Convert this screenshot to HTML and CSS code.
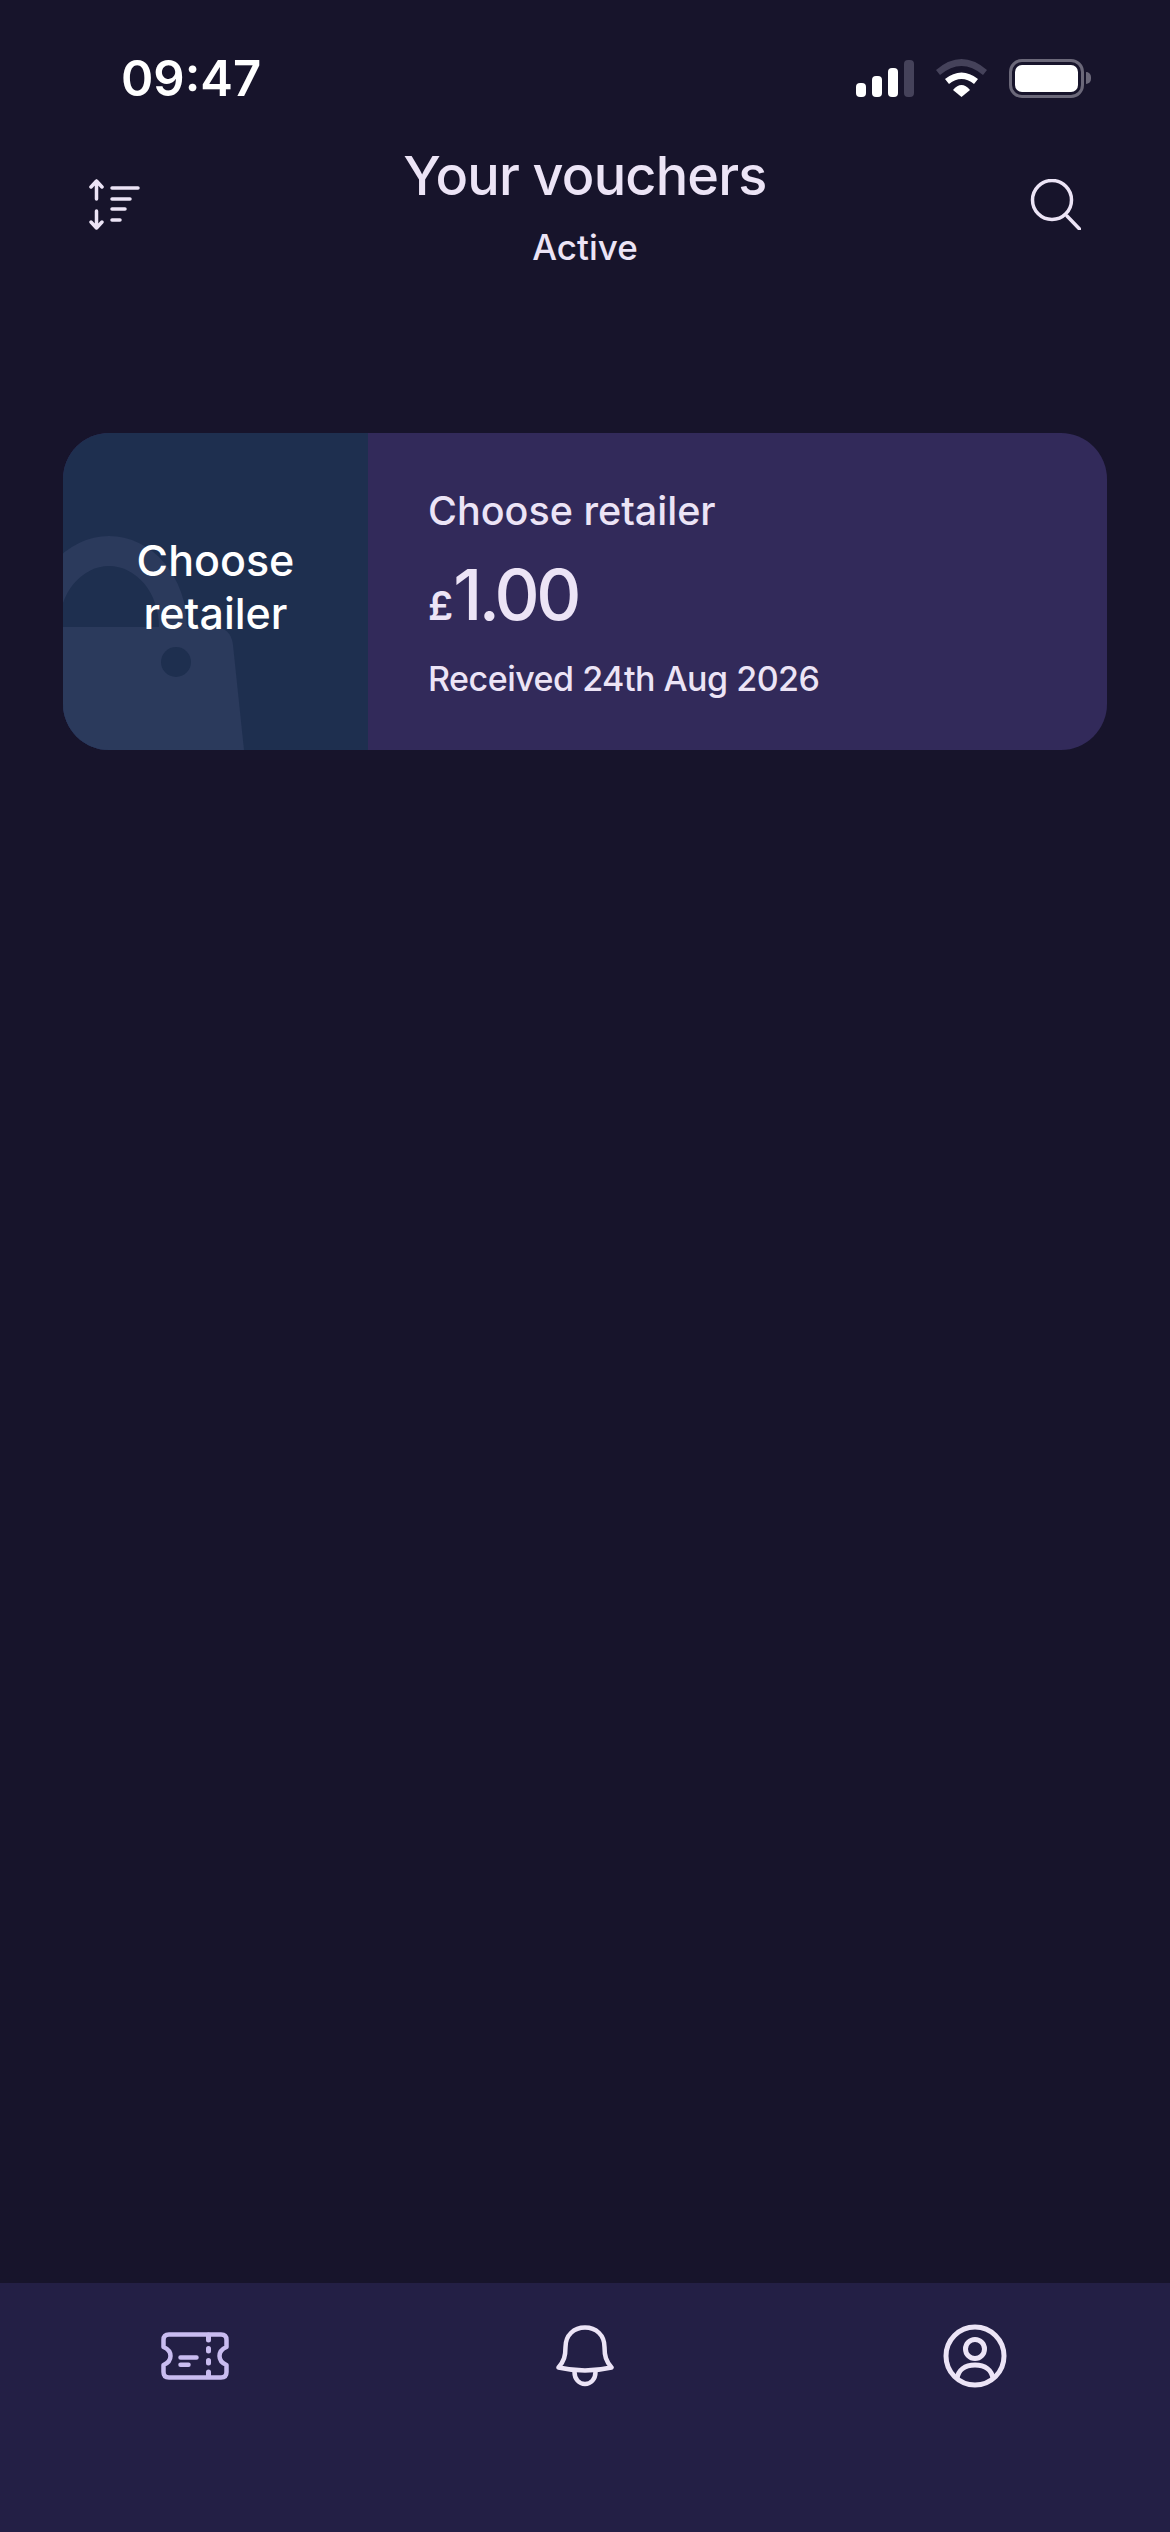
FILE: index.html
```html
<!DOCTYPE html>
<html lang="en">

<head>
    <meta charset="UTF-8" />
    <meta name="viewport" content="width=device-width, initial-scale=1.0" />
    <title>Your vouchers</title>
    <link rel="stylesheet" href="styles.css">
</head>

<body>
    <div class="app">
        <!-- Status bar -->
        <div class="status-bar">
            <span class="time">09:47</span>
            <div class="status-icons">
                <svg width="58" height="38" viewBox="0 0 58 38">
                    <rect x="0" y="24" width="10" height="14" rx="4" fill="#fff" />
                    <rect x="16" y="17" width="10" height="21" rx="4" fill="#fff" />
                    <rect x="32" y="9" width="10" height="29" rx="4" fill="#fff" />
                    <rect x="48" y="1" width="10" height="37" rx="4" fill="#45425a" />
                </svg>
                <svg width="51" height="38" viewBox="0 0 51 38">
                    <path d="M0 11Q25.500 -11 51 11L47 16Q25.500 -2 4 16Z" fill="#45425a" />
                    <path d="M9 20Q25.500 7 42 20L38 25Q25.500 15 13 25Z" fill="#fff" />
                    <path d="M17 31Q25.500 21 34 31L25.500 38Z" fill="#fff" />
                </svg>
                <div class="battery">
                    <div class="battery-level"></div>
                </div>
                <div class="battery-cap"></div>
            </div>
        </div>

        <!-- Header -->
        <header class="header">
            <button class="icon-btn">
                <svg width="51" height="51" viewBox="0 0 51 51" fill="none" stroke="#ece4f6" stroke-width="3.500" stroke-linecap="round" stroke-linejoin="round">
                    <path d="M7.500 20V2M2 8L7.500 2 13 8" />
                    <path d="M7.500 32V49M2 43L7.500 49 13 43" />
                    <path d="M23 9H49M23 20H41M23 30H36M23 41H31" />
                </svg>
            </button>
            <div class="header-title">
                <h1>Your vouchers</h1>
                <p>Active</p>
            </div>
            <button class="icon-btn icon-right">
                <svg width="51" height="51" viewBox="0 0 51 51" fill="none" stroke="#ece4f6" stroke-width="3.500" stroke-linecap="round">
                    <circle cx="22" cy="21" r="19.500" />
                    <path d="M37 37L49.500 50" />
                </svg>
            </button>
        </header>

        <!-- Voucher list -->
        <main class="vouchers">
            <div class="voucher-card">
                <div class="voucher-logo">
                    <svg class="lock-bg" width="305" height="317" viewBox="0 0 305 317">
                        <path d="M-32 194A78 91 0 0 1 124 194H96A50 61 0 0 0 -4 194Z" fill="#2b3a5c" />
                        <path d="M-20 194H150Q168 194 170 212L181 317H-20Z" fill="#2b3a5c" />
                        <circle cx="113" cy="229" r="15" fill="#1e2f4f" />
                    </svg>
                    <span class="logo-text">Choose retailer</span>
                </div>
                <div class="voucher-info">
                    <div class="retailer">Choose retailer</div>
                    <div class="amount"><span class="currency">£</span>1.00</div>
                    <div class="received">Received 24th Aug 2026</div>
                </div>
            </div>
        </main>

        <!-- Bottom nav -->
        <nav class="tab-bar">
            <div class="tab">
                <svg width="68" height="48" viewBox="0 0 68 48" fill="none" stroke="#c9bcf0" stroke-width="4.500" stroke-linecap="round" stroke-linejoin="round">
                    <path d="M8 2.500H60Q65.500 2.500 65.500 8V15Q58.500 18 58.500 24T65.500 33V40Q65.500 45.500 60 45.500H8Q2.500 45.500 2.500 40V33Q9.500 30 9.500 24T2.500 15V8Q2.500 2.500 8 2.500Z" />
                    <path d="M47.500 3v5M47.500 16.500v2.500M47.500 28.500v2.500M47.500 40v4" stroke-width="5" />
                    <path d="M19.500 25.500h16M19.500 32.700h8" />
                </svg>
            </div>
            <div class="tab">
                <svg width="58" height="62" viewBox="0 0 58 62" fill="none" stroke="#ece4f6" stroke-width="4.500" stroke-linecap="round" stroke-linejoin="round">
                    <path d="M2.500 42.500C8 36 9.500 31 9.500 22C9.500 10 18 2.500 29 2.500S48.500 10 48.500 22C48.500 31 50 36 55.500 42.500C38 46.500 20 46.500 2.500 42.500Z" />
                    <path d="M18.500 47C18.500 54 23 59 29 59S39.500 54 39.500 47" />
                </svg>
            </div>
            <div class="tab">
                <svg width="64" height="64" viewBox="0 0 64 64" fill="none" stroke="#ece4f6" stroke-width="5">
                    <circle cx="32" cy="32" r="29" />
                    <circle cx="32" cy="25" r="9.500" />
                    <path d="M14 55C15 46 22 41 32 41S49 46 50 55" />
                </svg>
            </div>
        </nav>
    </div>
</body>

</html>
```

FILE: styles.css
```css
* {
    margin: 0;
    padding: 0;
    box-sizing: border-box;
}

body {
    font-family: Inter, "Liberation Sans", sans-serif;
    background-color: #17142b;
    color: #ece4f6;
}

.app {
    display: flex;
    flex-direction: column;
    height: 100vh;
}

.status-bar {
    display: flex;
    justify-content: space-between;
    align-items: center;
    height: 58px;
    margin-top: 49px;
    padding: 0 79px 0 121px;
}

.time {
    font-size: 49px;
    font-weight: 600;
    color: #fff;
}

.status-icons {
    display: flex;
    align-items: center;
    gap: 22px;
}

.battery {
    width: 75px;
    height: 39px;
    padding: 3px;
    border: 3px solid #6b6879;
    border-radius: 13px;
}

.battery-level {
    height: 100%;
    background-color: #fff;
    border-radius: 7px;
}

.battery-cap {
    width: 5px;
    height: 12px;
    margin-left: -20px;
    background-color: #6b6879;
    border-radius: 0 5px 5px 0;
}

.header {
    display: grid;
    grid-template-columns: 1fr auto 1fr;
    align-items: start;
    padding: 37px 89px 0;
}

.icon-btn {
    display: flex;
    margin-top: 35px;
    background: none;
    border: none;
}

.icon-right {
    justify-content: flex-end;
}

.header-title {
    text-align: center;
}

.header-title h1 {
    font-size: 54px;
    font-weight: 500;
    line-height: 64px;
    letter-spacing: -0.8px;
}

.header-title p {
    font-size: 35px;
    font-weight: 500;
    line-height: 44px;
    margin-top: 17px;
}

.vouchers {
    flex: 1;
    padding: 164px 63px 0;
}

.voucher-card {
    display: flex;
    height: 317px;
    overflow: hidden;
    background-color: #322a5a;
    border-radius: 46px;
}

.voucher-logo {
    position: relative;
    display: flex;
    align-items: center;
    justify-content: center;
    width: 305px;
    padding-bottom: 10px;
    background-color: #1e2f4f;
}

.lock-bg {
    position: absolute;
    top: 0;
    left: 0;
}

.logo-text {
    position: relative;
    width: 200px;
    font-size: 43px;
    font-weight: 500;
    line-height: 53px;
    text-align: center;
    color: #fff;
}

.voucher-info {
    padding: 54px 0 0 60px;
}

.retailer {
    font-size: 39.500px;
    font-weight: 500;
    line-height: 48px;
}

.amount {
    display: flex;
    align-items: baseline;
    font-size: 70px;
    font-weight: 500;
    line-height: 80px;
    letter-spacing: -3.500px;
    margin-top: 20px;
}

.currency {
    font-size: 40px;
    font-weight: 600;
    letter-spacing: 0;
}

.received {
    font-size: 34px;
    font-weight: 500;
    line-height: 44px;
    letter-spacing: -0.5px;
    margin-top: 11px;
}

.tab-bar {
    display: grid;
    grid-template-columns: repeat(3, 1fr);
    grid-template-rows: 64px;
    height: 249px;
    padding-top: 41px;
    background-color: #231f45;
}

.tab {
    display: flex;
    justify-content: center;
    align-items: center;
}
```
